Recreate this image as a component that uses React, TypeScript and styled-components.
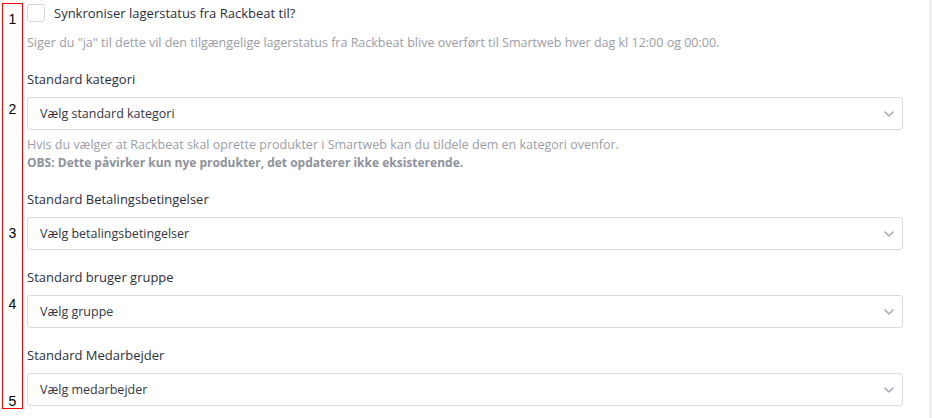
import React from "react";
import styled, { createGlobalStyle } from "styled-components";

const GlobalStyle = createGlobalStyle`
  html, body {
    margin: 0;
    padding: 0;
    background: #ffffff;
  }
  body {
    font-family: "Open Sans", "Noto Sans", "DejaVu Sans", sans-serif;
  }
  * { box-sizing: border-box; }
`;

const Page = styled.div`
  width: 932px;
  height: 418px;
  display: flex;
  align-items: flex-start;
  background: #ffffff;
  border-right: 3px solid #eff0f5;
  overflow: hidden;
`;

const NumberColumn = styled.div`
  margin: 3px 0 0 2px;
  width: 21px;
  height: 406px;
  border: 1px solid #ff0000;
  display: flex;
  flex-direction: column;
  align-items: center;
  flex-shrink: 0;
`;

const Num = styled.span<{ $gap: number }>`
  display: block;
  margin-top: ${(p) => p.$gap}px;
  font-family: "Liberation Sans", Arial, sans-serif;
  font-size: 14px;
  line-height: 16px;
  color: #000000;
`;

const Content = styled.div`
  flex: 1;
  margin-left: 4px;
  margin-right: 26px;
  padding-top: 4px;
  display: flex;
  flex-direction: column;
`;

const Group = styled.div`
  display: flex;
  flex-direction: column;
  margin-bottom: 17px;
`;

const CheckRow = styled.label`
  display: flex;
  align-items: center;
  gap: 9px;
  height: 18px;
`;

const Box = styled.span`
  width: 18px;
  height: 18px;
  border: 1px solid #d5d6de;
  border-radius: 3px;
  background: #ffffff;
  flex-shrink: 0;
`;

const Label = styled.div`
  font-size: 13px;
  line-height: 20px;
  color: #2c2e3d;
  margin-bottom: 8px;
`;

const CheckLabel = styled.span`
  font-size: 13px;
  line-height: 18px;
  color: #2c2e3d;
`;

const Help = styled.div<{ $top?: number }>`
  margin-top: ${(p) => p.$top ?? 0}px;
  font-size: 12.5px;
  line-height: 18px;
  color: #9b9da6;
`;

const HelpStrong = styled.div`
  font-size: 12px;
  line-height: 18px;
  font-weight: 700;
  color: #8e919b;
`;

const Select = styled.div`
  height: 33px;
  border: 1px solid #d8d9e2;
  border-radius: 3px;
  background: #ffffff;
  display: flex;
  align-items: center;
  justify-content: space-between;
  padding: 0 8px 0 12px;
  font-size: 12.5px;
  color: #343644;
`;

const Chevron = () => (
  <svg width="10" height="6" viewBox="0 0 10 6" fill="none">
    <path d="M1 1 L5 5 L9 1" stroke="#a4a7b9" strokeWidth="1.6" strokeLinecap="round" strokeLinejoin="round" />
  </svg>
);

const SelectField = ({ label, placeholder }: { label: string; placeholder: string }) => (
  <>
    <Label>{label}</Label>
    <Select>
      <span>{placeholder}</span>
      <Chevron />
    </Select>
  </>
);

export default function App() {
  return (
    <>
      <GlobalStyle />
      <Page>
        <NumberColumn>
          <Num $gap={7}>1</Num>
          <Num $gap={74}>2</Num>
          <Num $gap={108}>3</Num>
          <Num $gap={55}>4</Num>
          <Num $gap={81}>5</Num>
        </NumberColumn>
        <Content>
          <Group>
            <CheckRow>
              <Box />
              <CheckLabel>Synkroniser lagerstatus fra Rackbeat til?</CheckLabel>
            </CheckRow>
            <Help $top={12}>
              Siger du "ja" til dette vil den tilgængelige lagerstatus fra Rackbeat blive overført til Smartweb hver dag kl 12:00 og 00:00.
            </Help>
          </Group>
          <Group>
            <SelectField label="Standard kategori" placeholder="Vælg standard kategori" />
            <Help $top={6}>
              Hvis du vælger at Rackbeat skal oprette produkter i Smartweb kan du tildele dem en kategori ovenfor.
            </Help>
            <HelpStrong>OBS: Dette påvirker kun nye produkter, det opdaterer ikke eksisterende.</HelpStrong>
          </Group>
          <Group>
            <SelectField label="Standard Betalingsbetingelser" placeholder="Vælg betalingsbetingelser" />
          </Group>
          <Group>
            <SelectField label="Standard bruger gruppe" placeholder="Vælg gruppe" />
          </Group>
          <Group>
            <SelectField label="Standard Medarbejder" placeholder="Vælg medarbejder" />
          </Group>
        </Content>
      </Page>
    </>
  );
}
